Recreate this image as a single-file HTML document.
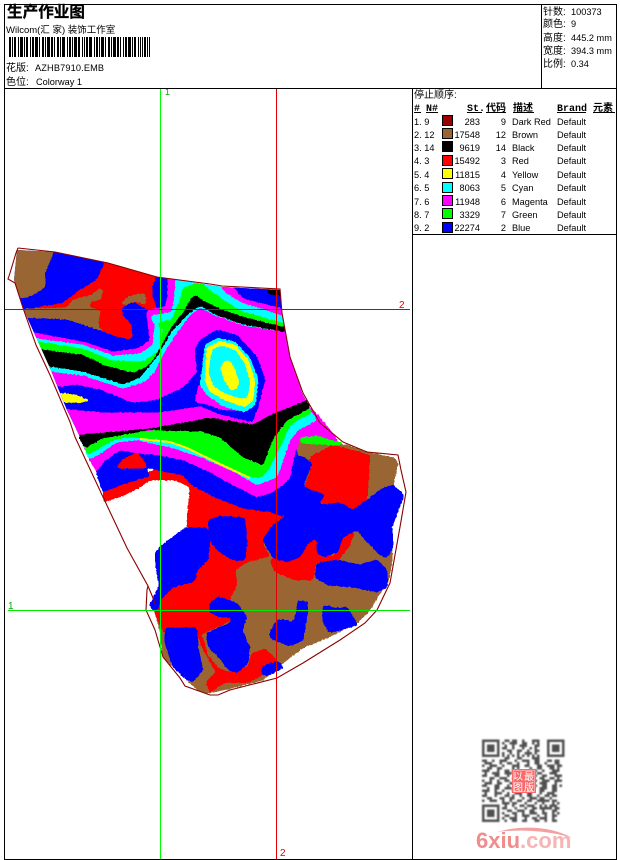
<!DOCTYPE html>
<html lang="zh">
<head>
<meta charset="utf-8">
<title>生产作业图</title>
<style>
html,body{margin:0;padding:0;background:#fff;width:620px;height:860px;overflow:hidden}
svg{display:block}
text{font-family:"Liberation Sans","WenQuanYi Zen Hei","Noto Sans CJK SC",sans-serif;font-size:9.2px;fill:#000}
.z{font-size:10px}
.h{font-family:"Liberation Mono","WenQuanYi Zen Hei","Noto Sans CJK SC",monospace;font-weight:bold;font-size:10px}
.u polygon{filter:url(#r)}
</style>
</head>
<body>
<svg xmlns="http://www.w3.org/2000/svg" width="620" height="860" viewBox="0 0 620 860">
<defs>
<clipPath id="up"><polygon points="17,250 55,252 108,263 157,277 222,287 280,290 282,313 288,350 302,393 312,412 300,432 200,442 85,450 80,437 67,410 50,368 36,337 23,308 14,280"/></clipPath>
<filter id="b" x="-5%" y="-5%" width="110%" height="110%"><feGaussianBlur stdDeviation="0.35"/></filter>
<filter id="r" filterUnits="userSpaceOnUse" x="0" y="230" width="420" height="480" color-interpolation-filters="sRGB">
<feGaussianBlur in="SourceGraphic" stdDeviation="1.6" result="g"/>
<feComponentTransfer in="g" result="t"><feFuncA type="linear" slope="30" intercept="-12"/></feComponentTransfer>
<feTurbulence type="fractalNoise" baseFrequency="0.45" numOctaves="1" seed="3" result="n"/>
<feDisplacementMap in="t" in2="n" scale="2.5" xChannelSelector="R" yChannelSelector="G"/>
</filter>
</defs>
<rect width="620" height="860" fill="#fff"/>

<g class="u" shape-rendering="crispEdges">
<g clip-path="url(#up)">
<rect x="0" y="240" width="320" height="220" fill="#0000ff"/>
<polygon fill="#996633" points="10,245 55,248 45,273 45,287 33,295 20,299 10,280"/>
<polygon fill="#ff0000" points="20,312 40,307 63,303 80,290 97,280 107,258 157,272 152,287 152,297 157,308 150,320 140,345 100,335 27,322"/>
<polygon fill="#996633" points="20,309 67,308 73,300 92,295 100,288 103,290 100,300 90,301 90,308 100,310 98,327 110,335 118,338 100,331 67,320 20,318"/>
<polygon fill="#996633" points="122,302 130,296 145,293 146,305 135,301 122,306"/>
<polygon fill="#0000ff" points="20,318 67,320 100,331 117,337 130,340 133,338 132,325 123,315 122,308 133,302 147,310 160,320 165,345 120,365 35,345"/>
<polygon fill="#ff00ff" points="0,326 35,333 83,342 113,352 140,348 150,340 147,318 147,310 165,307 168,295 168,270 400,270 400,500 0,500"/>
<polygon fill="#00ffff" points="0,332 38,339 83,345 113,356 140,354 153,345 155,325 150,316 172,312 175,295 176,270 215,272 225,290 243,303 282,316 400,316 400,500 0,500"/>
<polygon fill="#00ff00" points="0,338 40,342 83,349 113,361 143,362 160,350 163,330 156,323 172,320 180,300 183,288 200,282 212,292 228,303 243,312 282,323 400,323 400,500 0,500"/>
<polygon fill="#000000" points="0,345 43,350 83,355 105,366 133,373 147,367 155,358 165,340 170,330 185,310 190,300 195,295 205,302 222,310 243,317 282,327 400,327 400,500 0,500"/>
<polygon fill="#00ffff" points="0,365 50,367 83,372 123,385 140,378 150,366 158,356 167,340 172,332 190,313 200,306 215,315 243,325 282,332 400,332 400,500 0,500"/>
<polygon fill="#ff00ff" points="0,370 50,372 83,376 123,389 145,382 155,372 165,352 178,332 190,316 200,308 215,316 243,326 282,332 400,332 400,500 0,500"/>
<polygon fill="#ff00ff" points="218,280 232,284 243,298 290,311 290,316 243,303 225,292"/>
<polygon fill="#0000ff" points="228,280 290,280 290,310 243,298"/>
<polygon fill="#000" points="268,284 290,284 290,296 268,294"/>
<polygon fill="#0000ff" points="50,388 77,385 100,390 133,403 157,400 183,388 197,373 195,350 200,340 217,330 237,335 257,357 265,380 257,410 252,422 220,414 200,406 160,412 100,412 60,408"/>
<polygon fill="#ff00ff" points="195,402 199,384 215,392 235,405 248,410 225,410 205,404"/>
<polygon fill="#00ffff" points="205,345 218,338 235,342 250,358 258,380 255,405 245,412 225,407 207,395 200,385 203,365"/>
<polygon fill="#ffff00" points="207,348 220,341 235,345 248,360 255,380 253,400 245,407 225,400 210,392 205,380 206,362"/>
<polygon fill="#00ffff" points="212,350 222,346 235,350 245,365 250,382 247,398 240,398 225,393 213,385 209,372"/>
<polygon fill="#ffff00" points="224,361 230,361 236,372 239,386 232,391 224,380 221,368"/>
<polygon fill="#ffff00" points="58,393 72,394 92,401 72,403 60,401"/>
</g>

<!-- lower body -->
<polygon fill="#996633" points="296,440 347,445 370,453 395,458 398,463 393,485 403,495 392,523 392,563 388,583 380,593 370,610 357,623 327,638 303,648 283,663 263,680 240,686 210,693 200,692 187,680 163,657 160,630 155,613 200,520 280,500"/>
<polygon fill="#ff0000" points="104,502 103,490 142,476 170,462 290,480 292,512 270,530 263,545 270,556 247,562 235,570 237,585 230,598 232,620 200,635 163,632 155,613 152,605 165,590 190,575 210,545 187,527 190,487 175,480 150,480 142,486 125,495"/>
<polygon fill="#ff0000" points="310,457 333,445 370,455 367,500 353,510 340,503 323,505 318,500 325,495 317,492 303,490 310,473"/>
<polygon fill="#ff0000" points="273,558 300,557 308,540 317,540 320,557 335,556 343,537 355,530 350,545 338,561 316,562 313,580 295,580 275,572 270,560"/>
<polygon fill="#ff0000" points="200,630 208,655 218,668 228,672 248,667 252,653 265,649 277,660 262,675 250,682 223,683 210,693 206,682 216,672 203,650 197,632"/>
<polygon fill="#0000ff" points="96,472 103,492 120,485 142,478 150,476 145,467 158,470 183,475 192,485 217,498 243,508 270,512 285,517 277,497 290,483 300,470 295,440 200,440 100,440"/>
<polygon fill="#ff0000" points="116,468 123,459 137,453 144,461 147,468 130,468"/>
<polygon fill="#0000ff" points="300,455 312,463 303,487 325,495 318,505 340,503 353,510 367,500 383,488 393,485 404,495 392,527 393,547 387,558 380,555 365,540 357,530 343,537 338,552 325,557 317,553 317,538 308,543 300,557 287,562 273,558 263,540 273,525 285,517 277,497 290,483 292,460"/>
<polygon fill="#0000ff" points="317,563 337,560 360,565 377,560 387,570 388,587 377,592 353,587 327,585 315,577"/>
<polygon fill="#0000ff" points="208,520 220,516 245,518 247,540 245,560 233,560 217,550 210,540"/>
<polygon fill="#0000ff" points="155,553 162,545 185,528 208,528 210,542 208,560 197,570 195,581 173,587 160,600 158,610 152,610 150,604 159,587 156,567"/>
<polygon fill="#0000ff" points="210,603 218,597 237,603 247,617 242,630 250,648 248,663 237,673 228,670 220,658 208,647 207,633 230,623 232,617 220,617 210,613"/>
<polygon fill="#0000ff" points="165,628 197,628 198,647 203,670 193,682 187,680 173,667 165,643"/>
<polygon fill="#0000ff" points="262,667 277,661 284,667 270,675 262,675"/>
<polygon fill="#0000ff" points="270,632 277,620 287,620 293,623 296,613 298,600 308,602 307,617 303,640 290,646 278,642 270,638"/>
<polygon fill="#0000ff" points="323,605 337,608 347,607 358,625 330,633 323,623"/>
<polygon fill="#00ff00" points="299,436 317,434 347,445 330,445 300,443"/>
<polygon fill="#ff00ff" points="96,472 105,460 120,450 137,453 160,455 183,460 210,472 237,487 257,497 270,493 280,487 290,478 293,460 298,445 300,437 317,435 340,443 330,430 318,415 305,404 267,420 253,428 210,422 160,430 117,435 82,440 88,456"/>
<polygon fill="#00ffff" points="88,458 95,457 117,442 137,440 170,447 203,458 237,473 257,485 277,477 283,460 290,440 298,430 317,420 305,404 267,420 253,428 210,422 160,430 117,435 82,440"/>
<polygon fill="#00ff00" points="85,448 88,455 113,440 127,437 160,439 187,447 220,463 250,477 262,477 270,467 278,450 282,443 290,425 312,412 305,404 267,420 253,428 210,422 160,430 117,435 82,440"/>
<polygon fill="#000000" points="78,435 117,432 160,427 210,418 253,425 267,417 307,400 310,408 287,420 272,440 263,465 243,457 220,437 200,431 150,430 103,438 85,448"/>
</g>
<polyline shape-rendering="crispEdges" fill="none" stroke="#ffff00" stroke-width="2" points="140,439 170,442 187,448 220,464 250,478"/>

<!-- outline -->
<polyline fill="none" stroke="#8b0000" stroke-width="1.1" points="18,248 55,252 108,263 157,277 210,284 222,286 280,289 282,313 290,357 303,393 320,423 343,442 367,452 398,455 401,470 406,492 400,527 390,583 377,610 365,623 340,640 303,663 277,678 230,690 218,695 210,695 185,686 180,678 163,657 155,630 146,610 147,590 148,586 127,548 103,497 75,437 70,422 50,375 36,345 23,308 15,283 8,279 10,273 16,253 18,248"/>
<polyline fill="none" stroke="#8b0000" stroke-width="1.1" points="148,586 153,598 156,606"/>

<!-- guide lines -->
<g shape-rendering="crispEdges">
<rect x="160" y="88" width="1" height="771" fill="#00ff00"/>
<rect x="276" y="88" width="1" height="771" fill="#e00000"/>
<rect x="4" y="309" width="406" height="1" fill="#d00000"/>
<rect x="8" y="610" width="402" height="1" fill="#00e800"/>
</g>
<text x="165" y="95" style="fill:#00b000;font-size:9px">1</text>
<text x="399" y="308" style="fill:#e00000;font-size:10px">2</text>
<text x="8" y="609" style="fill:#00b000;font-size:10px">1</text>
<text x="280" y="856" style="fill:#e00000;font-size:10px">2</text>

<!-- frame -->
<g fill="none" stroke="#000" stroke-width="1" shape-rendering="crispEdges">
<rect x="4.5" y="4.5" width="612" height="855"/>
<path d="M4 88.5H617M541.5 4V88M412.5 88V860M412 234.5H617"/>
</g>

<!-- header -->
<text x="7" y="17" style="font-size:15.6px;font-weight:bold;stroke:#000;stroke-width:.3">生产作业图</text>
<text x="6" y="33" style="font-size:9.5px">Wilcom(汇 家) 装饰工作室</text>
<path shape-rendering="crispEdges" stroke="#000" stroke-width="20" fill="none" d="M9 47h2m1 0h1m1 0h2m2 0h1m1 0h3m1 0h1m1 0h2m2 0h1m1 0h2m1 0h3m1 0h1m2 0h2m1 0h1m1 0h3m1 0h2m1 0h1m2 0h2m1 0h1m1 0h3m2 0h1m1 0h2m1 0h1m1 0h3m1 0h2m2 0h1m1 0h1m1 0h2m1 0h3m2 0h1m1 0h2m1 0h1m1 0h3m1 0h1m2 0h2m1 0h1m1 0h3m1 0h2m1 0h1m2 0h1m1 0h2m1 0h3m1 0h1m1 0h2m2 0h1m1 0h1m1 0h1m1 0h2m1 0h1m1 0h1"/>
<text class="z" x="6" y="71">花版:</text><text x="35" y="71" style="letter-spacing:.15px">AZHB7910.EMB</text>
<text class="z" x="6" y="85">色位:</text><text x="36" y="85">Colorway 1</text>

<text class="z" x="543" y="15">针数:</text><text x="571" y="15">100373</text>
<text class="z" x="543" y="27">颜色:</text><text x="571" y="27">9</text>
<text class="z" x="543" y="41">高度:</text><text x="571" y="41">445.2 mm</text>
<text class="z" x="543" y="54">宽度:</text><text x="571" y="54">394.3 mm</text>
<text class="z" x="543" y="67">比例:</text><text x="571" y="67">0.34</text>

<!-- table -->
<text class="z" x="414" y="98">停止顺序:</text>
<text class="h" x="414" y="111">#</text>
<text class="h" x="426" y="111">N#</text>
<text class="h" x="467" y="111">St.</text>
<text class="h" x="486" y="111">代码</text>
<text class="h" x="513" y="111">描述</text>
<text class="h" x="557" y="111">Brand</text>
<text class="h" x="593" y="111">元素</text>
<path stroke="#000" d="M414 112.5h7M426 112.5h12M467 112.5h15M486 112.5h20M513 112.5h21M557 112.5h29M593 112.5h22" shape-rendering="crispEdges"/>

<g stroke="#000" stroke-width="1" shape-rendering="crispEdges">
<rect x="442.5" y="115.5" width="10" height="10" fill="#990000"/>
<rect x="442.5" y="128.5" width="10" height="10" fill="#996633"/>
<rect x="442.5" y="141.5" width="10" height="10" fill="#000000"/>
<rect x="442.5" y="155.5" width="10" height="10" fill="#ff0000"/>
<rect x="442.5" y="168.5" width="10" height="10" fill="#ffff00"/>
<rect x="442.5" y="182.5" width="10" height="10" fill="#00ffff"/>
<rect x="442.5" y="195.5" width="10" height="10" fill="#ff00ff"/>
<rect x="442.5" y="208.5" width="10" height="10" fill="#00ff00"/>
<rect x="442.5" y="222.5" width="10" height="10" fill="#0000ff"/>
</g>

<text x="414" y="125">1. 9</text><text x="480" y="125" text-anchor="end">283</text><text x="506" y="125" text-anchor="end">9</text><text x="512" y="125">Dark Red</text><text x="557" y="125">Default</text>
<text x="414" y="138">2. 12</text><text x="480" y="138" text-anchor="end">17548</text><text x="506" y="138" text-anchor="end">12</text><text x="512" y="138">Brown</text><text x="557" y="138">Default</text>
<text x="414" y="151">3. 14</text><text x="480" y="151" text-anchor="end">9619</text><text x="506" y="151" text-anchor="end">14</text><text x="512" y="151">Black</text><text x="557" y="151">Default</text>
<text x="414" y="164">4. 3</text><text x="480" y="164" text-anchor="end">15492</text><text x="506" y="164" text-anchor="end">3</text><text x="512" y="164">Red</text><text x="557" y="164">Default</text>
<text x="414" y="178">5. 4</text><text x="480" y="178" text-anchor="end">11815</text><text x="506" y="178" text-anchor="end">4</text><text x="512" y="178">Yellow</text><text x="557" y="178">Default</text>
<text x="414" y="191">6. 5</text><text x="480" y="191" text-anchor="end">8063</text><text x="506" y="191" text-anchor="end">5</text><text x="512" y="191">Cyan</text><text x="557" y="191">Default</text>
<text x="414" y="205">7. 6</text><text x="480" y="205" text-anchor="end">11948</text><text x="506" y="205" text-anchor="end">6</text><text x="512" y="205">Magenta</text><text x="557" y="205">Default</text>
<text x="414" y="218">8. 7</text><text x="480" y="218" text-anchor="end">3329</text><text x="506" y="218" text-anchor="end">7</text><text x="512" y="218">Green</text><text x="557" y="218">Default</text>
<text x="414" y="231">9. 2</text><text x="480" y="231" text-anchor="end">22274</text><text x="506" y="231" text-anchor="end">2</text><text x="512" y="231">Blue</text><text x="557" y="231">Default</text>

<!-- QR -->
<g transform="translate(482 739.5) scale(2.5)" filter="url(#b)" opacity=".85">
<path fill="none" stroke="#333" stroke-width="1" d="M.5 .5h6v6h-6zM26.5 .5h6v6h-6zM.5 26.5h6v6h-6z"/>
<path fill="#333" d="M2 2h3v3h-3zM28 2h3v3h-3zM2 28h3v3h-3z"/>
<path fill="none" stroke="#333" stroke-width="1" d="
M9 .5h2m1 0h2m2 0h1m3 0h3
M8 1.5h1m2 0h3m2 0h2m2 0h1m1 0h1
M9 2.5h1m2 0h1m2 0h3m3 0h2
M8 3.5h2m2 0h1m3 0h1m2 0h1m1 0h1
M10 4.5h2m2 0h2m2 0h1m2 0h2
M8 5.5h1m2 0h1m2 0h1m2 0h3m1 0h1
M8 6.5h1m1 0h1m1 0h1m1 0h1m1 0h1m1 0h1m1 0h1m1 0h1
M9 7.5h2m3 0h2m4 0h3
M0 8.5h2m2 0h1m2 0h3m3 0h1m2 0h3m2 0h2m3 0h2m1 0h2
M1 9.5h3m3 0h1m2 0h2m2 0h1m3 0h1m2 0h2m2 0h1m3 0h2
M0 10.5h1m2 0h3m2 0h1m3 0h3m2 0h2m3 0h2m2 0h3m1 0h2
M2 11.5h2m2 0h2m4 0h1m1 0h1m4 0h1m2 0h2m3 0h2m1 0h1
M0 12.5h3m3 0h1m2 0h2m1 0h1m7 0h2m2 0h1m3 0h3
M1 13.5h1m2 0h3m2 0h3m10 0h2m3 0h3
M0 14.5h2m3 0h2m3 0h1m10 0h1m2 0h2m3 0h3
M3 15.5h2m2 0h3m2 0h1m10 0h2m2 0h2m1 0h1
M0 16.5h1m2 0h1m2 0h1m2 0h2m10 0h1m2 0h3m2 0h3
M1 17.5h3m2 0h2m3 0h2m10 0h3m3 0h1
M0 18.5h2m3 0h2m3 0h1m10 0h1m2 0h2m2 0h2m1 0h1
M2 19.5h1m2 0h2m2 0h3m11 0h3m2 0h2
M0 20.5h3m2 0h1m2 0h1m3 0h2m2 0h1m3 0h1m2 0h2m3 0h2
M1 21.5h1m3 0h3m2 0h1m2 0h3m2 0h2m3 0h1m2 0h3
M0 22.5h2m3 0h1m3 0h2m1 0h1m2 0h1m2 0h2m2 0h1m2 0h2m1 0h2
M2 23.5h2m3 0h2m2 0h2m3 0h1m2 0h3m1 0h2m2 0h1
M0 24.5h1m2 0h3m2 0h1m2 0h1m2 0h2m2 0h2m2 0h5m1 0h2
M8 25.5h3m1 0h2m3 0h1m3 0h1m2 0h1m3 0h1m1 0h1
M9 26.5h1m2 0h1m2 0h2m1 0h3m2 0h1m1 0h1m1 0h3
M8 27.5h2m3 0h1m3 0h1m2 0h2m1 0h5m1 0h2
M10 28.5h2m2 0h3m2 0h2m3 0h1m3 0h2
M8 29.5h1m3 0h2m2 0h1m2 0h3m2 0h2m2 0h1m1 0h1
M9 30.5h2m2 0h1m2 0h3m3 0h1m2 0h1m2 0h2
M8 31.5h1m2 0h3m3 0h1m2 0h2m1 0h3m2 0h1
M9 32.5h1m2 0h2m2 0h2m3 0h2m2 0h1m2 0h2"/>
</g>
<rect x="512" y="769" width="24" height="24" fill="#fb6a6a"/>
<rect x="513.5" y="770.5" width="21" height="21" fill="none" stroke="#fff" stroke-width=".6" opacity=".6"/>
<text x="513" y="780" style="font-size:10px;fill:#fff">以</text>
<text x="524" y="780" style="font-size:10px;fill:#fff">最</text>
<text x="513" y="791" style="font-size:10px;fill:#fff">图</text>
<text x="524" y="791" style="font-size:10px;fill:#fff">版</text>

<!-- 6xiu logo -->
<path d="M497 832C520 825 552 826 572 838C552 831 520 829 497 832Z" fill="#f2a0a0"/>
<text x="476" y="848" style="font-size:22px;font-weight:bold;fill:#f08c8c">6xiu<tspan style="fill:#f7b4b4">.com</tspan></text>
</svg>
</body>
</html>
